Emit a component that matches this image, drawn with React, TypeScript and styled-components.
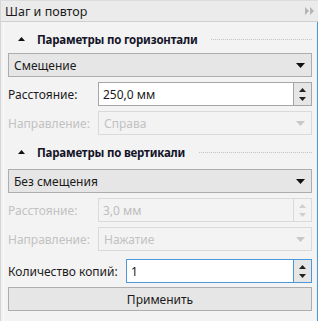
import React from 'react';
import styled, { createGlobalStyle } from 'styled-components';

const Global = createGlobalStyle`
  html, body { margin: 0; padding: 0; background: #f0f0f0; }
  body { font-family: "Noto Sans", "Liberation Sans", sans-serif; font-size: 12px; color: #1b1b1b; }
`;

const Docker = styled.div`
  width: 318px;
  height: 321px;
  box-sizing: border-box;
  border-left: 1px solid #d6d6d6;
  border-top: 1px solid #dcdcdc;
  background: #f0f0f0;
  display: flex;
  flex-direction: column;
`;

const TitleBar = styled.div`
  height: 20px;
  flex: none;
  display: flex;
  align-items: center;
  justify-content: space-between;
  padding: 0 3px 0 4px;
  background: #ebebeb;
  border-bottom: 1px solid #cfcfcf;
  font-size: 12.5px;
`;

const Body = styled.div`
  flex: 1;
  margin-left: 2px;
  display: flex;
  border-left: 1px solid #fbfbfb;
`;

const Content = styled.div`
  flex: 1;
  padding: 7px 4px 0 4px;
  background: #f3f3f3;
  display: flex;
  flex-direction: column;
`;

const Edge = styled.div`
  width: 1px;
  margin-left: 1px;
  background: #4a97d9;
`;

const SectionHead = styled.div<{ $top: number; $bottom: number }>`
  height: 20px;
  margin: ${p => p.$top}px 0 ${p => p.$bottom}px;
  display: flex;
  align-items: center;
  gap: 12px;
  padding-left: 10px;
  font-weight: 700;
  font-size: 11.5px;
  letter-spacing: -0.2px;
  color: #141428;
  &::after {
    content: '';
    flex: 1;
    border-top: 1px dotted #c4c4c4;
    margin: 1px 0 0 2px;
  }
`;

const Select = styled.div<{ $disabled?: boolean }>`
  height: 24px;
  box-sizing: border-box;
  flex: 1;
  display: flex;
  align-items: center;
  justify-content: space-between;
  padding: 0 5px 0 5px;
  border: 1px solid ${p => (p.$disabled ? '#dadada' : '#adadad')};
  background: ${p => (p.$disabled ? '#f3f3f3' : '#e6e6e6')};
  color: ${p => (p.$disabled ? '#c2c2c2' : '#1b1b1b')};
  font-size: 12px;
`;

const Row = styled.div<{ $gap?: number }>`
  display: flex;
  align-items: center;
  margin-top: ${p => p.$gap ?? 5}px;
`;

const Label = styled.div<{ $disabled?: boolean; $w?: number }>`
  width: ${p => p.$w ?? 90}px;
  flex: none;
  font-size: 12px;
  color: ${p => (p.$disabled ? '#c2c2c2' : '#1b1b1b')};
`;

const Spin = styled.div<{ $disabled?: boolean; $focus?: boolean }>`
  flex: 1;
  height: 24px;
  box-sizing: border-box;
  display: flex;
  border: 1px solid ${p => (p.$focus ? '#4a97d9' : p.$disabled ? '#dadada' : '#a6a6a6')};
  background: ${p => (p.$disabled ? '#f3f3f3' : '#ffffff')};
  color: ${p => (p.$disabled ? '#bdbdbd' : '#1b1b1b')};
  font-size: 12px;
`;

const SpinValue = styled.div`
  flex: 1;
  display: flex;
  align-items: center;
  padding-left: 4px;
`;

const SpinButtons = styled.div<{ $disabled?: boolean; $focus?: boolean }>`
  width: 17px;
  display: flex;
  flex-direction: column;
  align-items: center;
  justify-content: center;
  gap: 5px;
  border-left: 1px solid ${p => (p.$focus ? '#4a97d9' : p.$disabled ? '#dadada' : '#a6a6a6')};
  background: ${p => (p.$disabled ? '#f3f3f3' : '#e6e6e6')};
`;

const ApplyButton = styled.div`
  margin-top: 4px;
  height: 24px;
  box-sizing: border-box;
  display: flex;
  align-items: center;
  justify-content: center;
  border: 1px solid #adadad;
  background: #e6e6e6;
  font-size: 12px;
`;

const Tri = ({ dir, color, w = 7 }: { dir: 'up' | 'down'; color: string; w?: number }) => (
  <svg width={w} height={4} viewBox="0 0 7 4">
    {dir === 'up' ? <polygon points="3.5,0 7,4 0,4" fill={color} /> : <polygon points="0,0 7,0 3.5,4" fill={color} />}
  </svg>
);

const Arrow = ({ disabled }: { disabled?: boolean }) => (
  <svg width={9} height={5} viewBox="0 0 9 5" style={{ marginRight: 1 }}>
    <polygon points="0,0 9,0 4.5,5" fill={disabled ? '#c8c8c8' : '#111'} />
  </svg>
);

const NumberField = ({ value, disabled, focus }: { value: string; disabled?: boolean; focus?: boolean }) => (
  <Spin $disabled={disabled} $focus={focus}>
    <SpinValue>{value}</SpinValue>
    <SpinButtons $disabled={disabled} $focus={focus}>
      <Tri dir="up" color={disabled ? '#cfcfcf' : '#222'} />
      <Tri dir="down" color={disabled ? '#cfcfcf' : '#222'} />
    </SpinButtons>
  </Spin>
);

export default function App() {
  return (
    <>
      <Global />
      <Docker>
        <TitleBar>
          <span>Шаг и повтор</span>
          <svg width={10} height={8} viewBox="0 0 10 8">
            <polygon points="0,0 4,4 0,8" fill="#b4b4b4" />
            <polygon points="5,0 9,4 5,8" fill="#b4b4b4" />
          </svg>
        </TitleBar>
        <Body>
          <Content>
            <SectionHead $top={0} $bottom={4}>
              <Tri dir="up" color="#111" />
              Параметры по горизонтали
            </SectionHead>
            <Row $gap={0}>
              <Select>
                Смещение
                <Arrow />
              </Select>
            </Row>
            <Row $gap={5}>
              <Label>Расстояние:</Label>
              <NumberField value="250,0 мм" />
            </Row>
            <Row $gap={5}>
              <Label $disabled>Направление:</Label>
              <Select $disabled>
                Справа
                <Arrow disabled />
              </Select>
            </Row>
            <SectionHead $top={7} $bottom={7}>
              <Tri dir="up" color="#111" />
              Параметры по вертикали
            </SectionHead>
            <Row $gap={0}>
              <Select>
                Без смещения
                <Arrow />
              </Select>
            </Row>
            <Row $gap={5}>
              <Label $disabled>Расстояние:</Label>
              <NumberField value="3,0 мм" disabled />
            </Row>
            <Row $gap={5}>
              <Label $disabled>Направление:</Label>
              <Select $disabled>
                Нажатие
                <Arrow disabled />
              </Select>
            </Row>
            <Row $gap={8}>
              <Label $w={118}>Количество копий:</Label>
              <NumberField value="1" focus />
            </Row>
            <ApplyButton>Применить</ApplyButton>
          </Content>
          <Edge />
        </Body>
      </Docker>
    </>
  );
}
